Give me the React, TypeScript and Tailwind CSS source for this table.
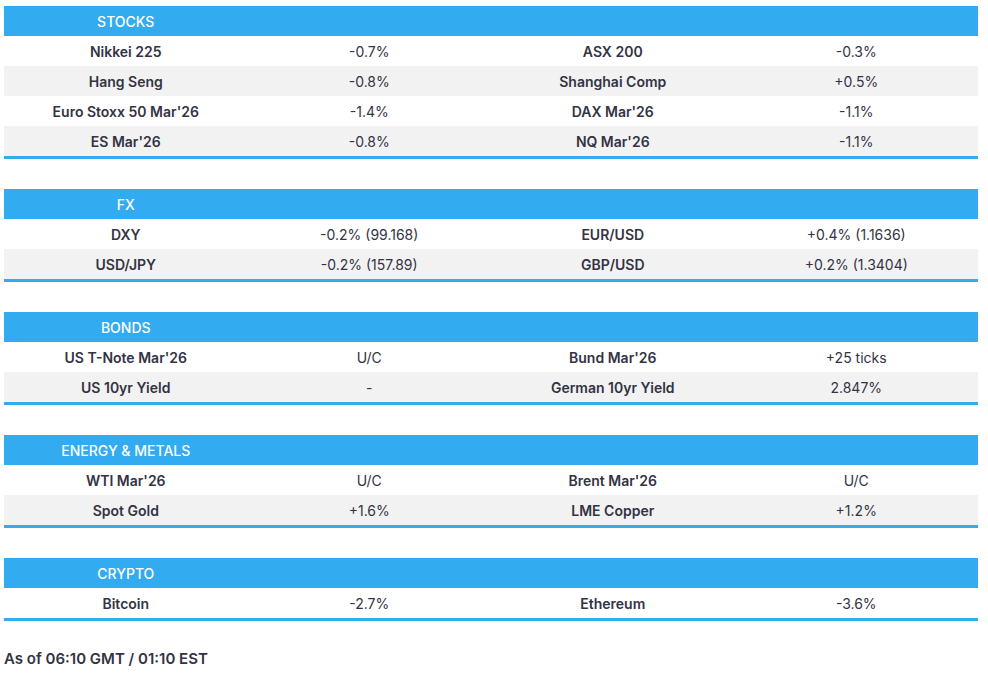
const sections: { title: string; rows: [string, string, string, string][] }[] = [
  {
    title: "STOCKS",
    rows: [
      ["Nikkei 225", "-0.7%", "ASX 200", "-0.3%"],
      ["Hang Seng", "-0.8%", "Shanghai Comp", "+0.5%"],
      ["Euro Stoxx 50 Mar'26", "-1.4%", "DAX Mar'26", "-1.1%"],
      ["ES Mar'26", "-0.8%", "NQ Mar'26", "-1.1%"],
    ],
  },
  {
    title: "FX",
    rows: [
      ["DXY", "-0.2% (99.168)", "EUR/USD", "+0.4% (1.1636)"],
      ["USD/JPY", "-0.2% (157.89)", "GBP/USD", "+0.2% (1.3404)"],
    ],
  },
  {
    title: "BONDS",
    rows: [
      ["US T-Note Mar'26", "U/C", "Bund Mar'26", "+25 ticks"],
      ["US 10yr Yield", "-", "German 10yr Yield", "2.847%"],
    ],
  },
  {
    title: "ENERGY & METALS",
    rows: [
      ["WTI Mar'26", "U/C", "Brent Mar'26", "U/C"],
      ["Spot Gold", "+1.6%", "LME Copper", "+1.2%"],
    ],
  },
  {
    title: "CRYPTO",
    rows: [["Bitcoin", "-2.7%", "Ethereum", "-3.6%"]],
  },
];

function Section({ title, rows }: { title: string; rows: [string, string, string, string][] }) {
  return (
    <div className="border-b-[3px] border-[#33abf0]">
      <div className="grid h-[30px] grid-cols-4 items-center bg-[#33abf0] text-white">
        <div className="text-center font-medium">{title}</div>
      </div>
      {rows.map((r, i) => (
        <div
          key={i}
          className={`grid h-[30px] grid-cols-4 items-center ${i % 2 === 1 ? "bg-[#f2f2f2]" : "bg-white"}`}
        >
          <div className="text-center font-semibold">{r[0]}</div>
          <div className="text-center">{r[1]}</div>
          <div className="text-center font-semibold">{r[2]}</div>
          <div className="text-center">{r[3]}</div>
        </div>
      ))}
    </div>
  );
}

export default function App() {
  return (
    <div
      className="min-h-[673px] w-[988px] bg-white px-[4px] pt-[6px] text-[14px] text-[#333344]"
      style={{ fontFamily: "Inter, 'Noto Sans', sans-serif" }}
    >
      <div className="flex w-[974px] flex-col gap-[30px]">
        {sections.map((s) => (
          <Section key={s.title} title={s.title} rows={s.rows} />
        ))}
      </div>
      <p className="mt-[27px] text-[15px] font-semibold">As of 06:10 GMT / 01:10 EST</p>
    </div>
  );
}
